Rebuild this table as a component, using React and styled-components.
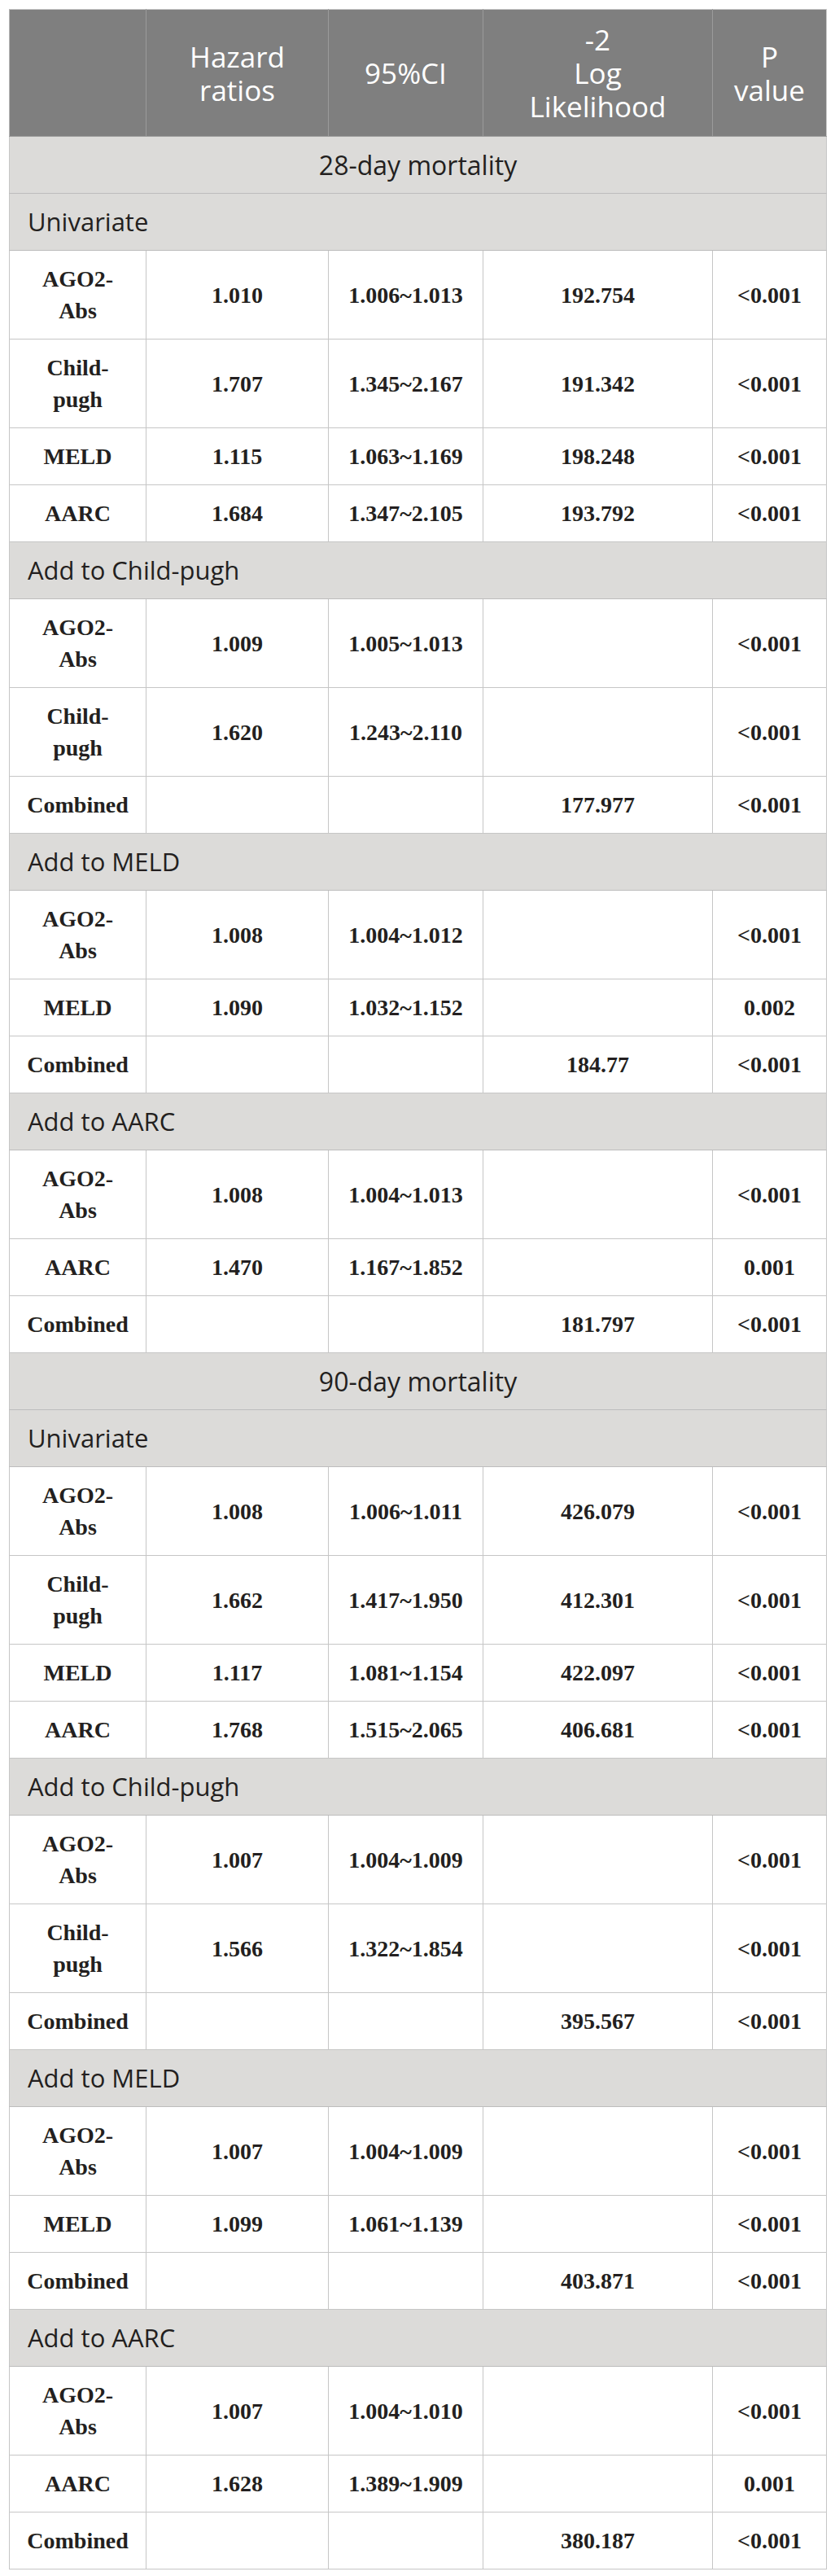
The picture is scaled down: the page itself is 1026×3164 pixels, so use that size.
import React from 'react'
import styled, { createGlobalStyle } from 'styled-components'

const GlobalStyle = createGlobalStyle`
  body {
    margin: 0;
    background: #ffffff;
  }
`

const Page = styled.div`
  padding: 11px 11px 10px 11px;
  background: #ffffff;
`

const Table = styled.table`
  width: 1004px;
  border-collapse: collapse;
  table-layout: fixed;
  border: 1px solid #c6c6c6;
`

const HeadCell = styled.th`
  background-color: #7f7f7f;
  color: #ffffff;
  font-family: 'Open Sans', 'Noto Sans', sans-serif;
  font-weight: 400;
  font-size: 35px;
  line-height: 41px;
  padding: 16px 6px;
  text-align: center;
  vertical-align: middle;
  border-left: 1px solid #9b9b9b;
  border-bottom: 1px solid #9b9b9b;

  &:first-child {
    border-left: 1px solid #b5b5b5;
  }
`

const SectionCell = styled.td`
  background-color: #dcdbd9;
  color: #231f20;
  font-family: 'Open Sans', 'Noto Sans', sans-serif;
  font-weight: 400;
  font-size: ${(p) => (p.$center ? '32px' : '31px')};
  line-height: 39px;
  padding: 15px 22px;
  text-align: ${(p) => (p.$center ? 'center' : 'left')};
  border-top: 1px solid #c2c2c2;
  border-bottom: 1px solid #bdbdbd;
`

const Cell = styled.td`
  color: #231f20;
  font-family: 'Liberation Serif', 'Times New Roman', serif;
  font-weight: 700;
  font-size: 28px;
  line-height: 39px;
  padding: 15px 8px;
  text-align: center;
  vertical-align: middle;
  border: 1px solid #c6c6c6;
`

const header = [['Hazard', 'ratios'], ['95%CI'], ['-2', 'Log', 'Likelihood'], ['P', 'value']]

const widths = [168, 224, 190, 282, 140]

const blocks = [
  {
    title: '28-day mortality',
    groups: [
      {
        name: 'Univariate',
        rows: [
          [['AGO2-', 'Abs'], '1.010', '1.006~1.013', '192.754', '<0.001'],
          [['Child-', 'pugh'], '1.707', '1.345~2.167', '191.342', '<0.001'],
          [['MELD'], '1.115', '1.063~1.169', '198.248', '<0.001'],
          [['AARC'], '1.684', '1.347~2.105', '193.792', '<0.001']
        ]
      },
      {
        name: 'Add to Child-pugh',
        rows: [
          [['AGO2-', 'Abs'], '1.009', '1.005~1.013', '', '<0.001'],
          [['Child-', 'pugh'], '1.620', '1.243~2.110', '', '<0.001'],
          [['Combined'], '', '', '177.977', '<0.001']
        ]
      },
      {
        name: 'Add to MELD',
        rows: [
          [['AGO2-', 'Abs'], '1.008', '1.004~1.012', '', '<0.001'],
          [['MELD'], '1.090', '1.032~1.152', '', '0.002'],
          [['Combined'], '', '', '184.77', '<0.001']
        ]
      },
      {
        name: 'Add to AARC',
        rows: [
          [['AGO2-', 'Abs'], '1.008', '1.004~1.013', '', '<0.001'],
          [['AARC'], '1.470', '1.167~1.852', '', '0.001'],
          [['Combined'], '', '', '181.797', '<0.001']
        ]
      }
    ]
  },
  {
    title: '90-day mortality',
    groups: [
      {
        name: 'Univariate',
        rows: [
          [['AGO2-', 'Abs'], '1.008', '1.006~1.011', '426.079', '<0.001'],
          [['Child-', 'pugh'], '1.662', '1.417~1.950', '412.301', '<0.001'],
          [['MELD'], '1.117', '1.081~1.154', '422.097', '<0.001'],
          [['AARC'], '1.768', '1.515~2.065', '406.681', '<0.001']
        ]
      },
      {
        name: 'Add to Child-pugh',
        rows: [
          [['AGO2-', 'Abs'], '1.007', '1.004~1.009', '', '<0.001'],
          [['Child-', 'pugh'], '1.566', '1.322~1.854', '', '<0.001'],
          [['Combined'], '', '', '395.567', '<0.001']
        ]
      },
      {
        name: 'Add to MELD',
        rows: [
          [['AGO2-', 'Abs'], '1.007', '1.004~1.009', '', '<0.001'],
          [['MELD'], '1.099', '1.061~1.139', '', '<0.001'],
          [['Combined'], '', '', '403.871', '<0.001']
        ]
      },
      {
        name: 'Add to AARC',
        rows: [
          [['AGO2-', 'Abs'], '1.007', '1.004~1.010', '', '<0.001'],
          [['AARC'], '1.628', '1.389~1.909', '', '0.001'],
          [['Combined'], '', '', '380.187', '<0.001']
        ]
      }
    ]
  }
]

const Lines = ({ lines }) =>
  lines.map((l, i) => (
    <React.Fragment key={i}>
      {i > 0 && <br />}
      {l}
    </React.Fragment>
  ))

export default function App() {
  return (
    <Page>
      <GlobalStyle />
      <Table>
        <colgroup>
          {widths.map((w, i) => <col key={i} style={{ width: w }} />)}
        </colgroup>
        <thead>
          <tr>
            <HeadCell />
            {header.map((h, i) => (
              <HeadCell key={i}><Lines lines={h} /></HeadCell>
            ))}
          </tr>
        </thead>
        <tbody>
          {blocks.map((block) => (
            <React.Fragment key={block.title}>
              <tr>
                <SectionCell colSpan={5} $center>{block.title}</SectionCell>
              </tr>
              {block.groups.map((group) => (
                <React.Fragment key={group.name}>
                  <tr>
                    <SectionCell colSpan={5}>{group.name}</SectionCell>
                  </tr>
                  {group.rows.map(([label, ...vals], r) => (
                    <tr key={r}>
                      <Cell><Lines lines={label} /></Cell>
                      {vals.map((v, c) => <Cell key={c}>{v}</Cell>)}
                    </tr>
                  ))}
                </React.Fragment>
              ))}
            </React.Fragment>
          ))}
        </tbody>
      </Table>
    </Page>
  )
}
